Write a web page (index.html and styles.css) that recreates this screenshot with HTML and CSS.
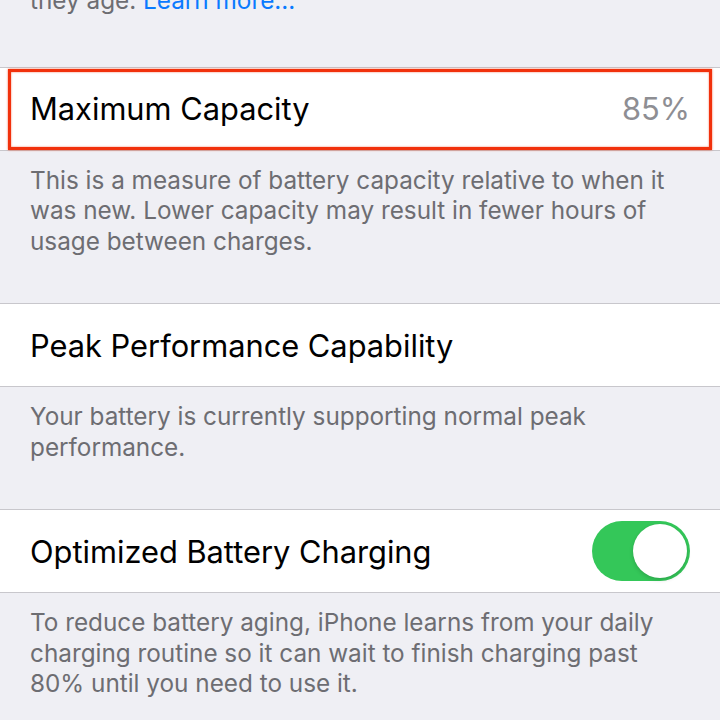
FILE: index.html
```html
<!DOCTYPE html>
<html lang="en">
<head>
  <meta charset="UTF-8">
  <meta name="viewport" content="width=device-width, initial-scale=1.0">
  <title>Battery Health</title>
  <link rel="stylesheet" href="styles.css">
</head>
<body>
  <div class="settings">
    <p class="footer footer-cut">they age. <a href="#">Learn more...</a></p>

    <!-- Maximum Capacity -->
    <div class="group">
      <div class="row highlighted">
        <span class="row-title">Maximum Capacity</span>
        <span class="row-value">85%</span>
      </div>
    </div>
    <p class="footer">This is a measure of battery capacity relative to when it was new. Lower capacity may result in fewer hours of usage between charges.</p>

    <!-- Peak Performance -->
    <div class="group">
      <div class="row">
        <span class="row-title">Peak Performance Capability</span>
      </div>
    </div>
    <p class="footer">Your battery is currently supporting normal peak performance.</p>

    <!-- Optimized Charging -->
    <div class="group">
      <div class="row">
        <span class="row-title">Optimized Battery Charging</span>
        <span class="toggle on"><span class="knob"></span></span>
      </div>
    </div>
    <p class="footer">To reduce battery aging, iPhone learns from your daily charging routine so it can wait to finish charging past 80% until you need to use it.</p>
  </div>
</body>
</html>
```

FILE: styles.css
```css
body {
  margin: 0;
  padding: 0;
  background: #efeff4;
  font-family: Inter, "Noto Sans", sans-serif;
  overflow: hidden;
}

.settings {
  width: 720px;
}

.footer {
  margin: 0;
  padding: 14px 30px 47px;
  font-size: 24.3px;
  line-height: 30.5px;
  color: #6d6d72;
}

.footer a {
  color: #0a7aff;
  text-decoration: none;
}

.footer-cut {
  margin-top: -15px;
  padding-top: 0;
  padding-bottom: 51px;
}

.group {
  background: #fff;
  border-top: 1px solid #c8c7cc;
  border-bottom: 1px solid #c8c7cc;
}

.row {
  height: 82px;
  padding: 0 30px;
  display: flex;
  align-items: center;
  justify-content: space-between;
  position: relative;
}

.row-title {
  font-size: 30.8px;
  color: #000;
}

.row-value {
  font-size: 30.8px;
  color: #8e8e93;
}

/* red annotation box drawn over the row */
.highlighted::after {
  content: "";
  position: absolute;
  top: 1px;
  bottom: 0;
  left: 8px;
  right: 8px;
  border: 3px solid #f1310c;
  box-shadow: 0 0 2px rgba(241, 49, 12, 0.7), inset 0 0 2px rgba(241, 49, 12, 0.7);
}

.toggle {
  width: 98px;
  height: 60px;
  border-radius: 30px;
  background: #e5e5ea;
  display: flex;
  align-items: center;
  padding: 3px;
  box-sizing: border-box;
}

.toggle.on {
  background: #34c759;
  justify-content: flex-end;
}

.knob {
  width: 54px;
  height: 54px;
  border-radius: 50%;
  background: #fff;
  box-shadow: 0 2px 4px rgba(0, 0, 0, 0.15), 0 0 1px rgba(0, 0, 0, 0.1);
}
```
